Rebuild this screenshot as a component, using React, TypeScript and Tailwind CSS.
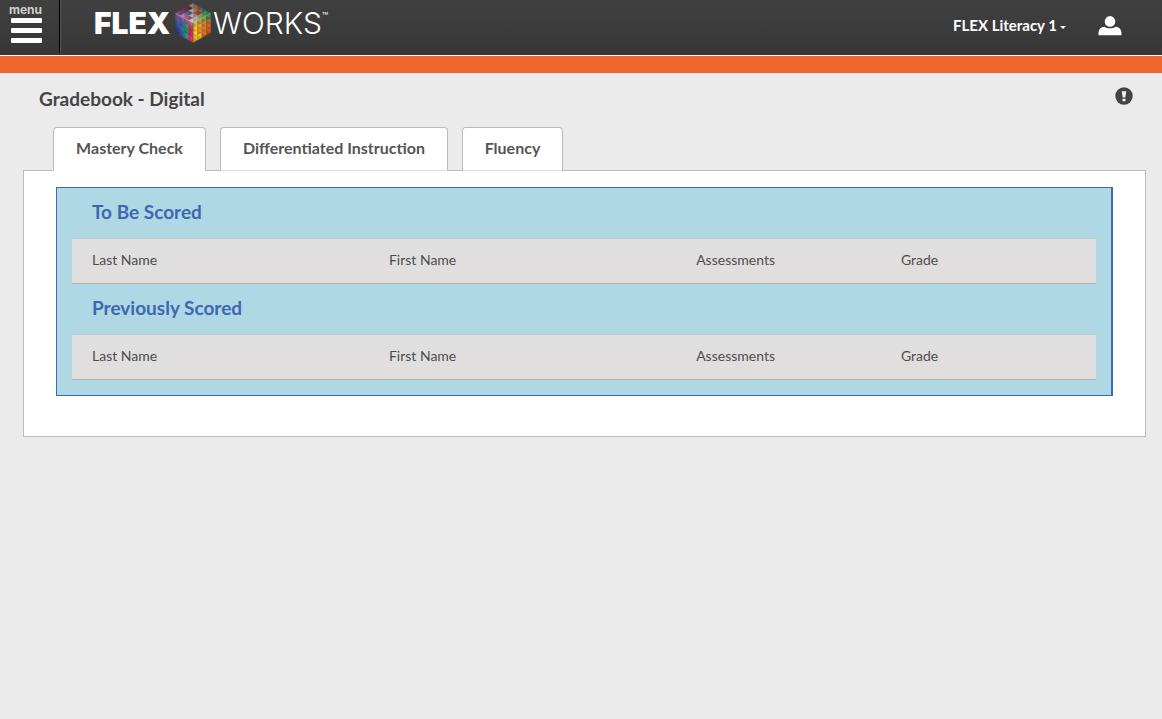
import { useState } from "react";

type Point = [number, number];

const TOP_FACE = [
  ["#8f7f7c", "#6d2a3c", "#8b2f6d", "#7d4b8c"],
  ["#b5532c", "#a8a09c", "#37708f", "#b57aa5"],
  ["#2c7f95", "#c33d2e", "#b9a7a4", "#a4627a"],
  ["#3c8f55", "#7ea04c", "#b7b29c", "#d2c5bd"],
];

const LEFT_FACE = [
  ["#7b58a0", "#8e5aa2", "#9c5c98", "#b46a86"],
  ["#4a5ca8", "#3a63ae", "#2fa06a", "#d8344b"],
  ["#33549c", "#3f6cb0", "#1f9a4f", "#d6247c"],
  ["#2d3f80", "#355ea6", "#4b8f8e", "#e0405e"],
];

const RIGHT_FACE = [
  ["#d9bf4c", "#a7a94c", "#8c9a45", "#3f8f58"],
  ["#f8c62c", "#f3a02b", "#c98a3a", "#b86c34"],
  ["#fbd22f", "#f0912a", "#e77b2a", "#d3642c"],
  ["#f7b52c", "#f3c23a", "#dd7427", "#cf5a2a"],
];

function Face({ origin, across, down, colors }: { origin: Point; across: Point; down: Point; colors: string[][] }) {
  const at = (c: number, r: number) =>
    `${origin[0] + (across[0] * c + down[0] * r) / 4},${origin[1] + (across[1] * c + down[1] * r) / 4}`;
  return (
    <g>
      {colors.flatMap((row, r) =>
        row.map((color, c) => (
          <g key={`${r}-${c}`}>
            <polygon
              points={`${at(c, r)} ${at(c + 1, r)} ${at(c + 1, r + 1)} ${at(c, r + 1)}`}
              fill={color}
              stroke={color}
              strokeWidth="0.3"
            />
            <polygon points={`${at(c, r)} ${at(c + 1, r + 1)} ${at(c, r + 1)}`} fill="#000" fillOpacity="0.18" />
          </g>
        )),
      )}
    </g>
  );
}

function Cube() {
  return (
    <svg viewBox="0 0 36 40" className="h-10 w-9" aria-hidden="true">
      <Face origin={[18, 0.5]} across={[-17.5, 9.75]} down={[17.5, 9.75]} colors={TOP_FACE} />
      <Face origin={[0.5, 10.25]} across={[17.5, 9.75]} down={[0, 19.5]} colors={LEFT_FACE} />
      <Face origin={[18, 20]} across={[17.5, -9.75]} down={[0, 19.5]} colors={RIGHT_FACE} />
      <path d="M.5 10.25 18 20 35.5 10.25" fill="none" stroke="#ead9c8" strokeOpacity="0.6" strokeWidth="0.6" />
      <path d="M18 20v19.5" stroke="#3a2a2a" strokeWidth="0.5" />
    </svg>
  );
}

function Header() {
  return (
    <header className="flex h-[55px] items-stretch bg-linear-to-b from-[#404040] to-[#373737] text-white">
      <button className="flex h-[53px] w-[60px] flex-col items-start border-r border-black pt-1 pl-[9px] shadow-[1px_0_0_#555]">
        <span className="h-[14px] font-[Inter,sans-serif] text-[12px] leading-3 font-bold text-[#d0d0d0]">menu</span>
        <span className="ml-[2px] flex flex-col gap-[5px]">
          <span className="h-[5px] w-[31px] rounded-[1px] bg-white" />
          <span className="h-[5px] w-[31px] rounded-[1px] bg-white" />
          <span className="h-[5px] w-[31px] rounded-[1px] bg-white" />
        </span>
      </button>
      <a href="#" className="ml-[34px] flex h-[45px] items-center font-[Inter,sans-serif] text-[30px] leading-none">
        <span className="w-[81px] font-black">FLEX</span>
        <Cube />
        <span className="ml-[2px] font-light">WORKS</span>
        <span className="self-start pt-[11px] text-[10px]">™</span>
      </a>
      <div className="mr-[40px] ml-auto flex h-[51px] items-center gap-8">
        <button className="flex items-center gap-[3px] text-[15px] font-bold">
          FLEX Literacy 1
          <svg viewBox="0 0 6 3" className="mt-[3px] h-[3px] w-[6px]" aria-hidden="true">
            <path d="M0 0h6L3 3z" fill="currentColor" />
          </svg>
        </button>
        <button aria-label="Account">
          <svg viewBox="0 0 24 20" className="h-5 w-6" fill="currentColor" aria-hidden="true">
            <circle cx="12" cy="5.4" r="5.3" />
            <path d="M.5 19.3v-2.4c0-3.4 2.6-6.2 6-6.2 1.2 1 3.2 1.6 5.5 1.6s4.300-.6 5.500-1.600c3.400 0 6 2.800 6 6.200v2.400z" />
          </svg>
        </button>
      </div>
    </header>
  );
}

const COLUMNS = ["Last Name", "First Name", "Assessments", "Grade"];

function ScoreTable({ title }: { title: string }) {
  return (
    <section>
      <h2 className="flex h-[50px] items-center pb-[2px] pl-5 text-[19px] font-bold text-[#3f67b1]">{title}</h2>
      <table
        aria-label={title}
        className="w-full table-fixed border-separate border-spacing-0 bg-[#e0dede] text-left text-sm text-[#4d4d4d]"
      >
        <colgroup>
          <col className="w-[29%]" />
          <col className="w-[30%]" />
          <col className="w-[20%]" />
          <col className="w-[21%]" />
        </colgroup>
        <thead>
          <tr>
            {COLUMNS.map((name) => (
              <th
                key={name}
                scope="col"
                className="h-[46px] border-t border-b border-t-[#c8c8c8] border-b-[#b0b0b0] pb-[2px] pl-5 font-normal"
              >
                {name}
              </th>
            ))}
          </tr>
        </thead>
      </table>
    </section>
  );
}

const TABS = [
  { name: "Mastery Check", width: "w-[153px]" },
  { name: "Differentiated Instruction", width: "w-[228px]" },
  { name: "Fluency", width: "w-[101px]" },
];

export default function App() {
  const [active, setActive] = useState(TABS[0].name);
  return (
    <div className="min-h-screen bg-[#ebebeb] font-[Lato,sans-serif] text-[#444]">
      <Header />
      <div className="h-[18px] border-t border-white bg-[#ee652e]" />
      <main className="pr-4 pl-[23px]">
        <div className="flex h-[54px] items-start justify-between pt-[14px] pr-[13px] pl-4">
          <h1 className="text-[19px] leading-6 font-bold">Gradebook - Digital</h1>
          <button aria-label="Alerts">
            <svg viewBox="0 0 18 18" className="h-[18px] w-[18px]" aria-hidden="true">
              <circle cx="9" cy="9" r="8.700" fill="#444" />
              <path d="M6.700 4.200h4.600l-1 6.200H7.700zM7.500 11.700h3v2.500h-3z" fill="#f2f2f2" />
            </svg>
          </button>
        </div>
        <div role="tablist" className="flex gap-[14px] pl-[30px]">
          {TABS.map((tab) => (
            <button
              key={tab.name}
              role="tab"
              aria-selected={active === tab.name}
              onClick={() => setActive(tab.name)}
              className={`${tab.width} h-11 rounded-t border border-[#bbb] bg-white pb-[2px] text-base font-bold whitespace-nowrap text-[#555] ${
                active === tab.name ? "relative z-10 border-b-white" : "border-b-[#ddd]"
              }`}
            >
              {tab.name}
            </button>
          ))}
        </div>
        <div className="-mt-px border border-[#bbb] bg-white px-8 pt-4 pb-10">
          <div className="border border-r-2 border-[#3f67b1] bg-[#add8e4] px-[15px] pb-[15px]">
            <ScoreTable title="To Be Scored" />
            <ScoreTable title="Previously Scored" />
          </div>
        </div>
      </main>
    </div>
  );
}
